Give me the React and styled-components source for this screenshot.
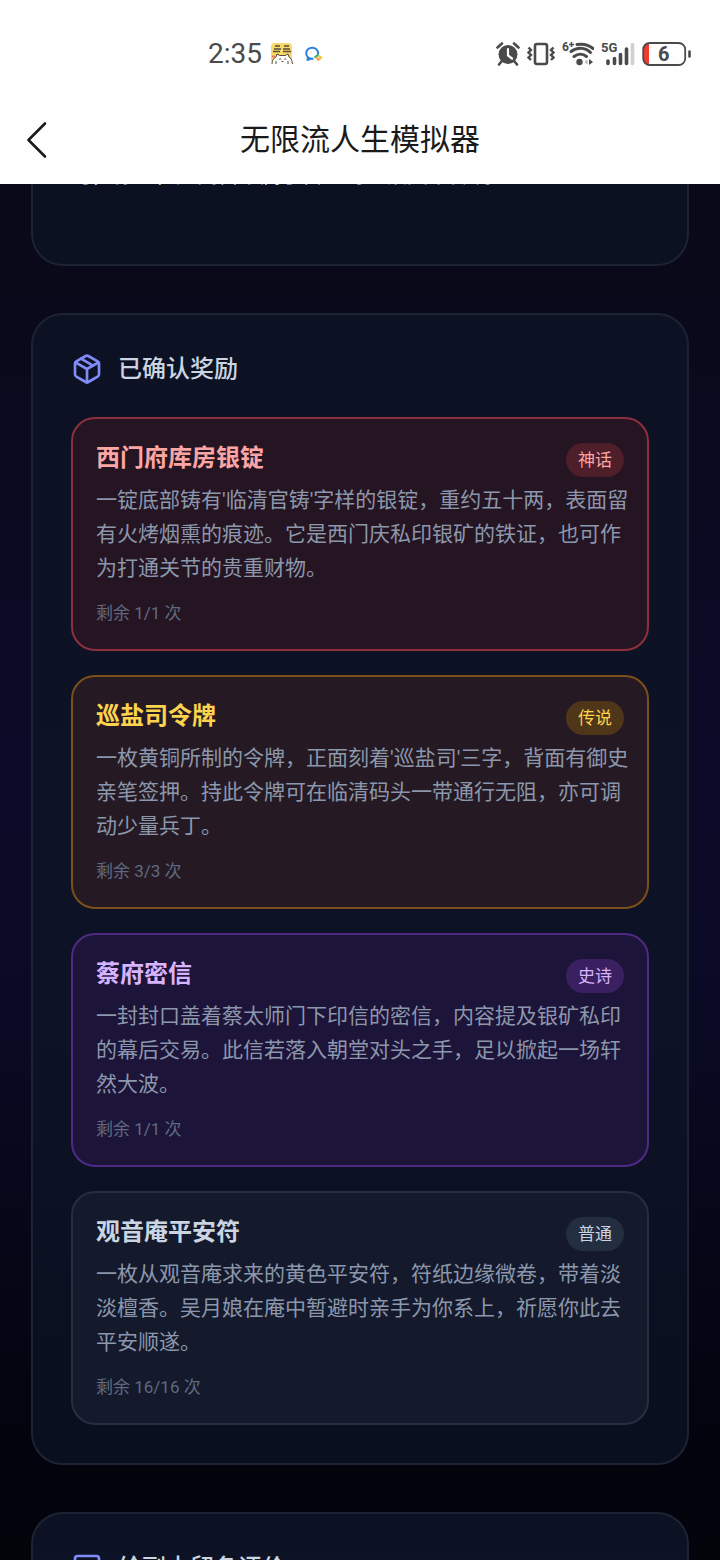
import React from 'react';
import styled, { createGlobalStyle, css } from 'styled-components';

const rewards = [
  {
    name: '西门府库房银锭',
    rarity: 'mythic',
    lines: [
      "一锭底部铸有'临清官铸'字样的银锭，重约五十两，表面留",
      '有火烤烟熏的痕迹。它是西门庆私印银矿的铁证，也可作',
      '为打通关节的贵重财物。',
    ],
    left: '1/1',
  },
  {
    name: '巡盐司令牌',
    rarity: 'legendary',
    lines: [
      "一枚黄铜所制的令牌，正面刻着'巡盐司'三字，背面有御史",
      '亲笔签押。持此令牌可在临清码头一带通行无阻，亦可调',
      '动少量兵丁。',
    ],
    left: '3/3',
  },
  {
    name: '蔡府密信',
    rarity: 'epic',
    lines: [
      '一封封口盖着蔡太师门下印信的密信，内容提及银矿私印',
      '的幕后交易。此信若落入朝堂对头之手，足以掀起一场轩',
      '然大波。',
    ],
    left: '1/1',
  },
  {
    name: '观音庵平安符',
    rarity: 'common',
    lines: [
      '一枚从观音庵求来的黄色平安符，符纸边缘微卷，带着淡',
      '淡檀香。吴月娘在庵中暂避时亲手为你系上，祈愿你此去',
      '平安顺遂。',
    ],
    left: '16/16',
  },
];

const rarities = {
  mythic: { label: '神话', text: '#fca5a5', border: '#8f2f3d', bg: '#251523', badge: '#4e1e2a' },
  legendary: { label: '传说', text: '#fcd34d', border: '#7d5019', bg: '#251a23', badge: '#4f3619' },
  epic: { label: '史诗', text: '#d8b4fe', border: '#4f2a85', bg: '#1d1439', badge: '#3a2060' },
  common: { label: '普通', text: '#cbd5e1', border: '#262f40', bg: '#141a2c', badge: '#232e40' },
};

const StatusIcons = () => (
  <StatusGroup $gap={7}>
    <svg width="24" height="26" viewBox="0 0 24 26" fill="none" stroke="#4a4a4a">
      <circle cx="12" cy="13.5" r="9.5" fill="#4a4a4a" stroke="none" />
      <path d="M1.5 6.5 6 2.500M22.5 6.5 18 2.5" strokeWidth="2.6" strokeLinecap="round" />
      <path d="m5.5 20.5-2.500 3M18.5 20.5l2.500 3" strokeWidth="2.6" strokeLinecap="round" />
      <path d="M12 8v6.5l4 3" stroke="#fff" strokeWidth="2.2" strokeLinecap="round" />
    </svg>
    <svg width="28" height="26" viewBox="0 0 28 26" fill="none" stroke="#4a4a4a" strokeWidth="2.6">
      <rect x="8" y="3" width="12" height="20" rx="2" />
      <path d="M1.5 6.5 4 9l-2.5 2.5L4 14l-2.5 2.5L4 19M26.5 6.5 24 9l2.5 2.5L24 14l2.5 2.5L24 19" strokeWidth="2.4" />
    </svg>
    <svg width="32" height="26" viewBox="0 0 32 26" fill="none" stroke="#4a4a4a">
      <SvgText x="0" y="10" $size={12}>6</SvgText>
      <path d="M9.5 1v5M7 3.5h5" strokeWidth="1.5" />
      <path d="M15 3.5c6-1 12 .5 16 4" strokeWidth="3" strokeLinecap="round" />
      <path d="M9 10.500c6-4.500 14-4.500 19.500 1" strokeWidth="3" strokeLinecap="round" />
      <path d="M12 15.500c4-3 9-3 12.500 0" strokeWidth="3" strokeLinecap="round" />
      <circle cx="17.5" cy="21" r="3.2" fill="#4a4a4a" stroke="none" />
      <path d="m25.5 18.500-3 2.500 3 2.500z" fill="#b8b8b8" stroke="none" />
      <path d="m27 18 4 3-4 3z" fill="#4a4a4a" stroke="none" />
    </svg>
    <svg width="34" height="26" viewBox="0 0 34 26" fill="none" stroke="#4a4a4a" strokeWidth="3.6" strokeLinecap="round">
      <SvgText x="0" y="11" $size={13}>5G</SvgText>
      <path d="M7 20v2.500M13.5 17.500v5M19.5 13.500v9M25.5 8v14.500" />
      <path d="M31.500 3.500v19" stroke="#cfcfcf" />
    </svg>
    <svg width="50" height="26" viewBox="0 0 50 26" fill="none">
      <path d="M7 2H6a5 5 0 0 0-5 5v12a5 5 0 0 0 5 5h1z" fill="#f03a2d" />
      <rect x="1.2" y="2" width="42" height="22" rx="6.5" stroke="#4a4a4a" strokeWidth="1.8" />
      <path d="M47.5 10.500v5" stroke="#4a4a4a" strokeWidth="2.6" strokeLinecap="round" />
      <SvgText x="16" y="20" $size={20}>6</SvgText>
    </svg>
  </StatusGroup>
);

const AppBadges = () => (
  <>
    <svg width="26" height="24" viewBox="0 0 26 24" fill="none" stroke="#5a4a3c">
      <rect x="1" y="1" width="21" height="20" rx="4" fill="#f6d968" stroke="none" />
      <path d="M5 4h5M4 7h7M3 9.5h7M14 4h5M13 7h7M13 9.5h8" strokeWidth="1.3" />
      <path d="M2 22c0-4 2-6 4-7l1-3 3 1.500h5l3-1.500 1 3c2 1 3 3 3.500 7" fill="#fff" />
      <path d="M9 17.500c1-1 2-1 2 0M14 17.500c1-1 2-1 2 0M11.500 19.500h2M6 19v3M18 19v3" />
      <path d="M2 14.500h3" stroke="#ef7a6b" strokeWidth="2" />
    </svg>
    <svg width="20" height="18" viewBox="0 0 20 18" fill="none" strokeWidth="2">
      <path d="M14 9.500A6 5.600 0 1 0 9.500 13.700" stroke="#2f80e0" />
      <path d="M4 12 3.500 15l4-1.500" stroke="#2f80e0" strokeLinejoin="round" />
      <path d="m10.500 12.500 4-3" stroke="#2fae73" />
      <path d="m12.500 12.500 2.500 3" stroke="#f2994a" />
      <path d="m14.500 11 2.500 1.500-2 2" stroke="#f2c230" />
    </svg>
  </>
);

const PackageIcon = () => (
  <SectionIcon viewBox="0 0 24 24">
    <path d="m7.5 4.27 9 5.15" />
    <path d="M21 8a2 2 0 0 0-1-1.73l-7-4a2 2 0 0 0-2 0l-7 4A2 2 0 0 0 3 8v8a2 2 0 0 0 1 1.73l7 4a2 2 0 0 0 2 0l7-4A2 2 0 0 0 21 16Z" />
    <path d="m3.3 7 8.7 5 8.7-5M12 22V12" />
  </SectionIcon>
);

const MessageIcon = () => (
  <SectionIcon viewBox="0 0 24 24">
    <path d="M21 15a2 2 0 0 1-2 2H7l-4 4V5a2 2 0 0 1 2-2h14a2 2 0 0 1 2 2z" />
  </SectionIcon>
);

const RewardCard = ({ reward }) => {
  const tone = rarities[reward.rarity];

  return (
    <Card $tone={tone}>
      <CardHead>
        <CardTitle $color={tone.text}>{reward.name}</CardTitle>
        <Badge $tone={tone}>{tone.label}</Badge>
      </CardHead>
      <Description>{reward.lines.join('\n')}</Description>
      <Remaining>剩余 {reward.left} 次</Remaining>
    </Card>
  );
};

const App = () => (
  <>
    <GlobalStyle />
    <Screen>
      <TopBar>
        <StatusBar>
          <StatusGroup $gap={8}>
            <Clock>2:35</Clock>
            <AppBadges />
          </StatusGroup>
          <StatusIcons />
        </StatusBar>
        <NavBar>
          <BackButton type="button" aria-label="返回">
            <svg width="22" height="38" viewBox="0 0 22 38" fill="none" stroke="#1a1a1a" strokeWidth="2.6" strokeLinecap="round" strokeLinejoin="round">
              <path d="M20 2.500 3.500 19 20 35.500" />
            </svg>
          </BackButton>
          <NavTitle>无限流人生模拟器</NavTitle>
        </NavBar>
      </TopBar>

      <Content>
        <Panel $continued>
          <StoryTail>
            <StoryText>时，你已在此间留下属于自己的一段因果传说。</StoryText>
          </StoryTail>
        </Panel>

        <Panel>
          <SectionHead>
            <PackageIcon />
            <SectionTitle>已确认奖励</SectionTitle>
          </SectionHead>
          <CardList>
            {rewards.map((reward) => (
              <RewardCard key={reward.name} reward={reward} />
            ))}
          </CardList>
        </Panel>

        <Panel>
          <SectionHead>
            <MessageIcon />
            <SectionTitle>给副本留条评价</SectionTitle>
          </SectionHead>
        </Panel>
      </Content>
    </Screen>
  </>
);

export default App;

const GlobalStyle = createGlobalStyle`
  * {
    box-sizing: border-box;
  }

  body {
    margin: 0;
    background: #04040d;
    font-family: Roboto, "Noto Sans CJK SC", sans-serif;
  }

  h1, h2, h3, p, ul {
    margin: 0;
    padding: 0;
    font-weight: inherit;
  }
`;

const Screen = styled.div`
  display: flex;
  flex-direction: column;
  height: 100vh;
  overflow: hidden;
`;

const TopBar = styled.header`
  flex-shrink: 0;
  background: #fefefe;
`;

const StatusBar = styled.div`
  display: flex;
  align-items: center;
  justify-content: space-between;
  height: 92px;
  padding: 16px 28px 0 208px;
`;

const StatusGroup = styled.div`
  display: flex;
  align-items: center;
  gap: ${({ $gap }) => $gap}px;

  svg {
    flex-shrink: 0;
  }
`;

const Clock = styled.span`
  color: #4a4a4a;
  font-size: 28px;
  line-height: 32px;
`;

const SvgText = styled.text`
  fill: #4a4a4a;
  stroke: none;
  font-size: ${({ $size }) => $size}px;
  font-weight: 700;
`;

const NavBar = styled.div`
  display: grid;
  grid-template-columns: 60px 1fr 60px;
  align-items: center;
  height: 92px;
  padding: 4px 12px 0;
`;

const BackButton = styled.button`
  display: flex;
  align-items: center;
  justify-content: flex-start;
  height: 60px;
  padding: 0 13px;
  border: none;
  background: none;
  cursor: pointer;
`;

const NavTitle = styled.h1`
  color: #1a1a1a;
  font-size: 30px;
  line-height: 40px;
  text-align: center;
`;

const Content = styled.main`
  flex: 1;
  display: flex;
  flex-direction: column;
  gap: 47px;
  min-height: 0;
  padding: 0 31px;
  overflow: hidden;
  background: linear-gradient(#090917 0%, #0c0a28 42%, #0b0a26 58%, #040410 88%, #03030a 100%);
`;

const Panel = styled.section`
  flex-shrink: 0;
  padding: 38px;
  border: 2px solid #1c2333;
  border-radius: 32px;
  background: linear-gradient(#0c1223, #0d1226 60%, #090f1e);

  ${({ $continued }) =>
    $continued &&
    css`
      padding-top: 0;
      border-top: none;
      border-radius: 0 0 32px 32px;
      background: #0c1121;
    `}
`;

/* only the last line of the story is still scrolled into view */
const StoryTail = styled.div`
  display: flex;
  align-items: flex-end;
  height: 42px;
  padding-bottom: 34px;
  overflow: hidden;
`;

const StoryText = styled.p`
  color: #cbd5e1;
  font-size: 21px;
  line-height: 34px;
`;

const SectionHead = styled.div`
  display: flex;
  align-items: center;
  gap: 15px;
  height: 32px;
`;

const SectionIcon = styled.svg`
  width: 32px;
  height: 32px;
  fill: none;
  stroke: #818cf8;
  stroke-width: 2;
  stroke-linecap: round;
  stroke-linejoin: round;
`;

const SectionTitle = styled.h2`
  color: #cbd5e1;
  font-size: 24px;
  font-weight: 500;
  line-height: 32px;
`;

const CardList = styled.ul`
  display: flex;
  flex-direction: column;
  gap: 24px;
  margin-top: 32px;
  list-style: none;
`;

const Card = styled.li`
  padding: 24px 23px;
  border: 2px solid ${({ $tone }) => $tone.border};
  border-radius: 24px;
  background: ${({ $tone }) => $tone.bg};
`;

const CardHead = styled.div`
  display: flex;
  align-items: flex-start;
  justify-content: space-between;
  height: 34px;
`;

const CardTitle = styled.h3`
  color: ${({ $color }) => $color};
  font-size: 24px;
  font-weight: 700;
  line-height: 30px;
`;

const Badge = styled.span`
  padding: 0 12px;
  border-radius: 17px;
  background: ${({ $tone }) => $tone.badge};
  color: ${({ $tone }) => $tone.text};
  font-size: 17px;
  line-height: 34px;
`;

const Description = styled.p`
  margin-top: 6px;
  color: #8c97ac;
  font-size: 21px;
  line-height: 34px;
  white-space: pre;
`;

const Remaining = styled.p`
  margin-top: 16px;
  color: #5f6a80;
  font-size: 17px;
  line-height: 24px;
`;
